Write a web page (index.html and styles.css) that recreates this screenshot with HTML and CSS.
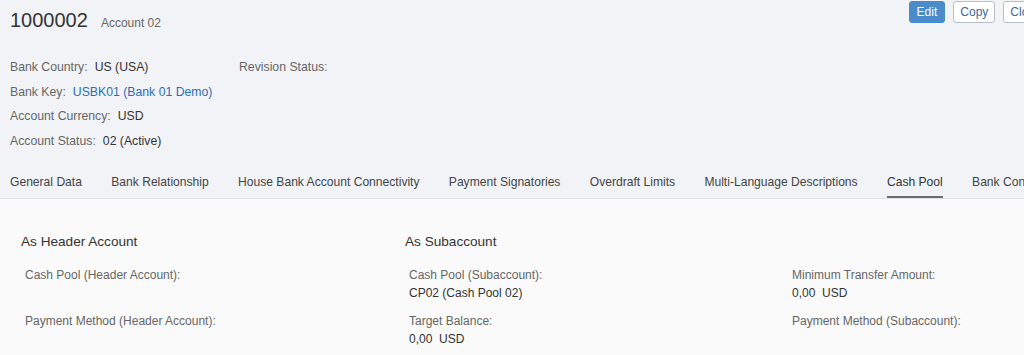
FILE: index.html
```html
<!DOCTYPE html>
<html lang="en">
<head>
<meta charset="utf-8">
<title>Bank Account 1000002</title>
<link rel="stylesheet" href="styles.css">
</head>
<body>
<div class="page">
  <header class="header">
    <div class="title-row">
      <div class="title">
        <span class="title-id">1000002</span>
        <span class="title-sub">Account 02</span>
      </div>
      <div class="actions">
        <button class="btn btn-primary">Edit</button>
        <button class="btn">Copy</button>
        <button class="btn">Close</button>
      </div>
    </div>
    <div class="facets">
      <div class="facet-col">
        <div class="field"><span class="lbl">Bank Country:</span><span class="val">US (USA)</span></div>
        <div class="field"><span class="lbl">Bank Key:</span><span class="val link">USBK01 (Bank 01 Demo)</span></div>
        <div class="field"><span class="lbl">Account Currency:</span><span class="val">USD</span></div>
        <div class="field"><span class="lbl">Account Status:</span><span class="val">02 (Active)</span></div>
      </div>
      <div class="facet-col">
        <div class="field"><span class="lbl">Revision Status:</span></div>
      </div>
    </div>
    <nav class="tabs">
      <span class="tab">General Data</span>
      <span class="tab">Bank Relationship</span>
      <span class="tab">House Bank Account Connectivity</span>
      <span class="tab">Payment Signatories</span>
      <span class="tab">Overdraft Limits</span>
      <span class="tab">Multi-Language Descriptions</span>
      <span class="tab active">Cash Pool</span>
      <span class="tab">Bank Contacts</span>
    </nav>
  </header>
  <main class="content">
    <section class="group g1">
      <h2 class="group-title">As Header Account</h2>
      <div class="item"><div class="ilbl">Cash Pool (Header Account):</div><div class="ival">&nbsp;</div></div>
      <div class="item"><div class="ilbl">Payment Method (Header Account):</div><div class="ival">&nbsp;</div></div>
    </section>
    <section class="group g2">
      <h2 class="group-title">As Subaccount</h2>
      <div class="item"><div class="ilbl">Cash Pool (Subaccount):</div><div class="ival">CP02 (Cash Pool 02)</div></div>
      <div class="item"><div class="ilbl">Target Balance:</div><div class="ival">0,00&nbsp; USD</div></div>
    </section>
    <section class="group g3">
      <h2 class="group-title">&nbsp;</h2>
      <div class="item"><div class="ilbl">Minimum Transfer Amount:</div><div class="ival">0,00&nbsp; USD</div></div>
      <div class="item"><div class="ilbl">Payment Method (Subaccount):</div><div class="ival">&nbsp;</div></div>
    </section>
  </main>
</div>
</body>
</html>
```

FILE: styles.css
```css
html, body {
  margin: 0;
  padding: 0;
  background: #fafafa;
  overflow: hidden;
}
body {
  font-family: "Liberation Sans", Arial, sans-serif;
  color: #333;
  width: 1024px;
  height: 355px;
}
.header {
  background: #f1f3f7;
}
.title-row {
  display: flex;
  align-items: flex-start;
  height: 44px;
}
.title {
  padding: 9px 0 0 10px;
  display: flex;
  align-items: baseline;
}
.title-id {
  font-size: 20px;
  color: #333;
}
.title-sub {
  font-size: 12px;
  color: #666;
  margin-left: 13px;
}
.actions {
  margin-left: auto;
  margin-right: -24px;
  display: flex;
  gap: 8px;
  padding-top: 1px;
  flex-shrink: 0;
}
.btn {
  font-family: inherit;
  font-size: 12px;
  height: 22px;
  padding: 0 6px;
  border: 1px solid #b7bfc8;
  border-radius: 3px;
  background: #fff;
  color: #3a6aa0;
}
.btn-primary {
  padding: 0 7px;
  background: #4a8ccb;
  border-color: #4a8ccb;
  color: #fff;
}
.facets {
  display: flex;
  padding: 11px 0 0 10px;
}
.facet-col {
  display: flex;
  flex-direction: column;
  width: 229px;
}
.field {
  height: 24.7px;
  line-height: 24px;
  font-size: 12.25px;
  white-space: nowrap;
}
.lbl {
  color: #666;
  margin-right: 7px;
}
.val {
  color: #333;
}
.link {
  color: #2b6fb6;
}
.tabs {
  display: flex;
  margin-top: 14px;
  padding-left: 10px;
  height: 30px;
  border-bottom: 1px solid #e1e4e9;
  white-space: nowrap;
}
.tab {
  font-size: 12.1px;
  color: #444;
  line-height: 29px;
  margin-right: 29.3px;
  border-bottom: 2px solid transparent;
  height: 30px;
  box-sizing: border-box;
}
.tab.active {
  border-bottom-color: #6a6d70;
  color: #333;
}
.content {
  display: flex;
  padding: 35px 0 0 0;
}
.group {
  display: flex;
  flex-direction: column;
}
.g1 { width: 384px; padding-left: 21px; box-sizing: border-box; }
.g2 { width: 383px; padding-left: 21px; box-sizing: border-box; }
.g3 { padding-left: 21px; }
.group-title {
  margin: 0 0 16px 0;
  font-size: 13.6px;
  font-weight: normal;
  color: #333;
  line-height: 16px;
}
.item {
  padding-left: 4px;
  margin-bottom: 10px;
  font-size: 12px;
  line-height: 18px;
}
.ilbl { color: #666; }
.ival { color: #333; }
```
